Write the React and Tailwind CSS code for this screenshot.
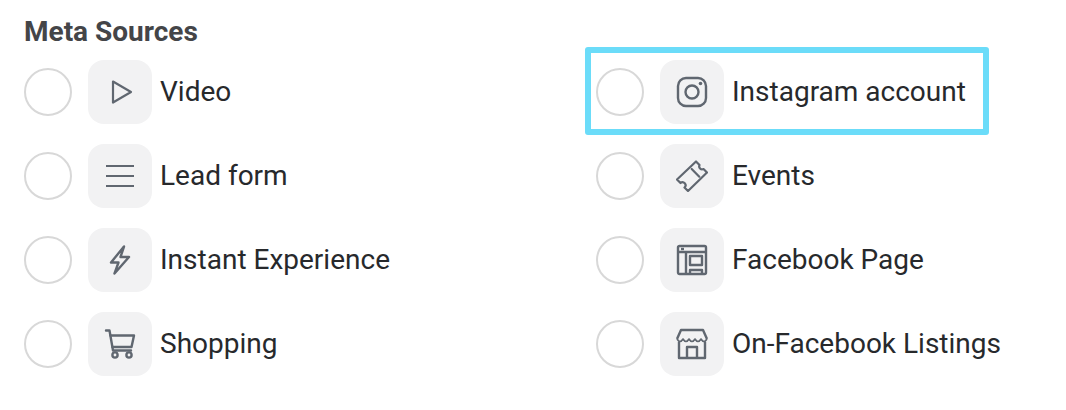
import { useState } from "react";

const iconClass = "h-8 w-8 fill-none stroke-[#606770]";

const PlayIcon = () => (
  <svg viewBox="0 0 32 32" className={iconClass} strokeWidth="2.2" strokeLinejoin="round">
    <path d="M9 5.5 L27 16 L9 26.5 Z" />
  </svg>
);

const MenuIcon = () => (
  <svg viewBox="0 0 32 32" className={iconClass} strokeWidth="2">
    <path d="M2 6h28M2 16h28M2 26h28" />
  </svg>
);

const BoltIcon = () => (
  <svg viewBox="0 0 32 32" className={iconClass} strokeWidth="2.4" strokeLinejoin="round">
    <path d="M20 2.5 L7 18.5 H14.5 L10.5 29.5 L25 13 H16.5 Z" />
  </svg>
);

const CartIcon = () => (
  <svg viewBox="0 0 32 32" className={iconClass} strokeWidth="2.4" strokeLinecap="round" strokeLinejoin="round">
    <path d="M2 2.5 H5.5 L9 22.5 H27" />
    <path d="M6.5 7.5 H30 L27.5 19 H8.5" />
    <circle cx="11" cy="27" r="2.6" />
    <circle cx="25" cy="27" r="2.6" />
  </svg>
);

const InstagramIcon = () => (
  <svg viewBox="0 0 32 32" className={iconClass} strokeWidth="2.4">
    <rect x="2" y="2" width="28" height="28" rx="8" />
    <circle cx="16" cy="16" r="6.5" />
    <circle cx="24.5" cy="7.5" r="1.8" className="fill-[#606770] stroke-none" />
  </svg>
);

const TicketIcon = () => (
  <svg viewBox="0 0 32 32" className={iconClass} strokeWidth="2.2" strokeLinejoin="round" strokeLinecap="round">
    <path d="M20 1.5 L23.5 5 A3 3 0 0 0 27.5 9 L31 12.5 L12 31 L8.5 27.5 A3 3 0 0 0 4.5 23 L1 19.5 Z" />
    <path d="M15.7 9 L23.3 16.7" />
  </svg>
);

const PageIcon = () => (
  <svg viewBox="0 0 32 32" className={iconClass} strokeWidth="2.4" strokeLinejoin="round">
    <rect x="2" y="2" width="28" height="28" rx="1.5" />
    <path d="M2 8 H30 M10 8 V30" />
    <path d="M5 5 H8" />
    <rect x="14" y="12" width="12" height="9" />
    <path d="M14 30 V26 H26 V30" />
  </svg>
);

const StoreIcon = () => (
  <svg viewBox="0 0 32 32" className={iconClass} strokeWidth="2.4" strokeLinejoin="round">
    <path d="M1 11 L5 2 H27 L31 11" />
    <path d="M1 11 q3 5 6 0 q3 5 6 0 q3 5 6 0 q3 5 6 0 q3 5 6 0" strokeWidth="1.6" />
    <path d="M3 14 V30 H29 V14" />
    <path d="M11 30 V19 H21 V30" />
  </svg>
);

const left = [
  { label: "Video", icon: <PlayIcon /> },
  { label: "Lead form", icon: <MenuIcon /> },
  { label: "Instant Experience", icon: <BoltIcon /> },
  { label: "Shopping", icon: <CartIcon /> },
];

const right = [
  { label: "Instagram account", icon: <InstagramIcon />, highlighted: true },
  { label: "Events", icon: <TicketIcon /> },
  { label: "Facebook Page", icon: <PageIcon /> },
  { label: "On-Facebook Listings", icon: <StoreIcon /> },
];

function SourceRow({ label, icon, highlighted, selected, onSelect }) {
  return (
    <div className="relative flex h-16 cursor-pointer items-center" onClick={onSelect}>
      {highlighted && (
        <div className="absolute top-[-13px] left-[-11px] h-[88px] w-[404px] rounded-[3px] border-[6px] border-[#6bdcf9]" />
      )}
      <div className={selected ? "h-12 w-12 rounded-full border-[8px] border-[#1877f2]" : "h-12 w-12 rounded-full border-2 border-[#d8d8d8]"} />
      <div className="ml-4 flex h-16 w-16 items-center justify-center rounded-2xl bg-[#f2f2f3]">
        {icon}
      </div>
      <span className="ml-2 text-[28px] leading-8 whitespace-nowrap text-[#27292c]">{label}</span>
    </div>
  );
}

export default function App() {
  const [selected, setSelected] = useState("");

  return (
    <div className="h-[410px] w-[1066px] overflow-hidden bg-white pt-[15px] pl-6 font-['Roboto',sans-serif]">
      <h2 className="text-[28px] leading-[34px] font-bold text-[#444548]">Meta Sources</h2>
      <div className="mt-[11px] grid grid-cols-[572px_1fr]">
        {[left, right].map((col, i) => (
          <div key={i} className="flex flex-col gap-5">
            {col.map((item) => (
              <SourceRow
                key={item.label}
                {...item}
                selected={selected === item.label}
                onSelect={() => setSelected(item.label)}
              />
            ))}
          </div>
        ))}
      </div>
    </div>
  );
}
